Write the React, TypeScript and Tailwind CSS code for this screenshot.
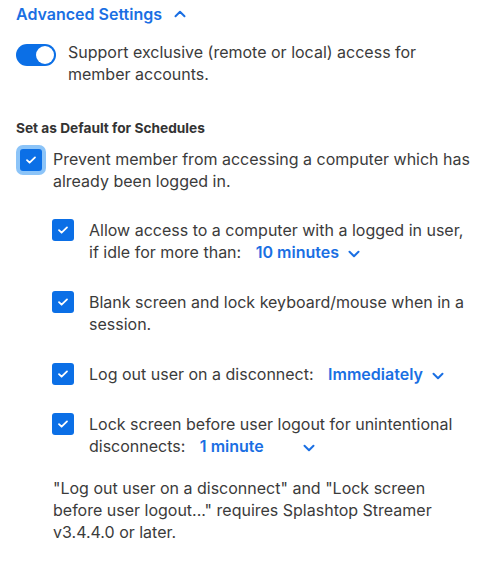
import React from 'react';

const Check: React.FC<{ focused?: boolean }> = ({ focused }) => (
  <span
    className={`flex h-[22px] w-[22px] shrink-0 items-center justify-center rounded-[3px] bg-[#0b6fe6] ${
      focused ? 'ring-4 ring-[#8cc4f8]' : ''
    }`}
  >
    <svg width="12" height="10" viewBox="0 0 12 10" fill="none">
      <path d="M2 5.2l2.6 2.5L10 2.4" stroke="white" strokeWidth="1.8" strokeLinecap="round" strokeLinejoin="round" />
    </svg>
  </span>
);

const Chevron: React.FC<{ up?: boolean; className?: string }> = ({ up, className }) => (
  <svg
    width="12"
    height="8"
    viewBox="0 0 12 8"
    fill="none"
    className={`${up ? 'rotate-180' : ''} ${className ?? ''}`}
  >
    <path d="M1.5 1.8l4.5 4.4 4.5-4.4" stroke="#1a6fe3" strokeWidth="2" strokeLinecap="round" strokeLinejoin="round" />
  </svg>
);

const Select: React.FC<{ value: string; textWidth?: string }> = ({ value, textWidth }) => (
  <span className="ml-[10px] whitespace-nowrap font-semibold text-[#1a6fe3]">
    <span className={textWidth}>{value}</span>
    <Chevron className="ml-[9px] inline-block align-middle" />
  </span>
);

const Row: React.FC<{ children: React.ReactNode; className?: string }> = ({ children, className }) => (
  <div className={`flex items-start gap-[15px] pl-9 ${className ?? ''}`}>
    <Check />
    <p className="leading-[22px]">{children}</p>
  </div>
);

export default function App() {
  return (
    <div
      className="w-[500px] bg-white pl-4 pr-[28px] text-[16px] text-[#3b3b3b]"
      style={{ fontFamily: 'Inter, "Noto Sans", sans-serif' }}
    >
      <div className="flex h-7 items-center gap-3">
        <span className="text-[16px] font-semibold text-[#1a6fe3]">Advanced Settings</span>
        <Chevron up />
      </div>

      <div className="mt-[13px] flex items-start gap-3">
        <span className="relative mt-[3px] h-[22px] w-10 shrink-0 rounded-full bg-[#0b6fe6]">
          <span className="absolute right-[2px] top-[2px] h-[18px] w-[18px] rounded-full bg-white" />
        </span>
        <p className="leading-[22px]">Support exclusive (remote or local) access for member accounts.</p>
      </div>

      <h3 className="mt-[33px] text-[13.7px] font-bold leading-5 text-[#333]">Set as Default for Schedules</h3>

      <div className="mt-[10px] flex items-start gap-[11px] pl-1">
        <span className="mt-[1px]">
          <Check focused />
        </span>
        <p className="leading-[22px]">Prevent member from accessing a computer which has already been logged in.</p>
      </div>

      <Row className="mt-[27px]">
        Allow access to a computer with a logged in user, if idle for more than: <Select value="10 minutes" />
      </Row>

      <Row className="mt-[28px]">Blank screen and lock keyboard/mouse when in a session.</Row>

      <Row className="mt-[28px]">
        Log out user on a disconnect: <Select value="Immediately" />
      </Row>

      <Row className="mt-[28px]">
        Lock screen before user logout for unintentional disconnects:{' '}
        <Select value="1 minute" textWidth="inline-block w-[94px]" />
      </Row>

      <p className="mt-5 pb-8 pl-[37px] leading-[22px]">
        "Log out user on a disconnect" and "Lock screen before user logout..." requires Splashtop Streamer v3.4.4.0 or
        later.
      </p>
    </div>
  );
}
